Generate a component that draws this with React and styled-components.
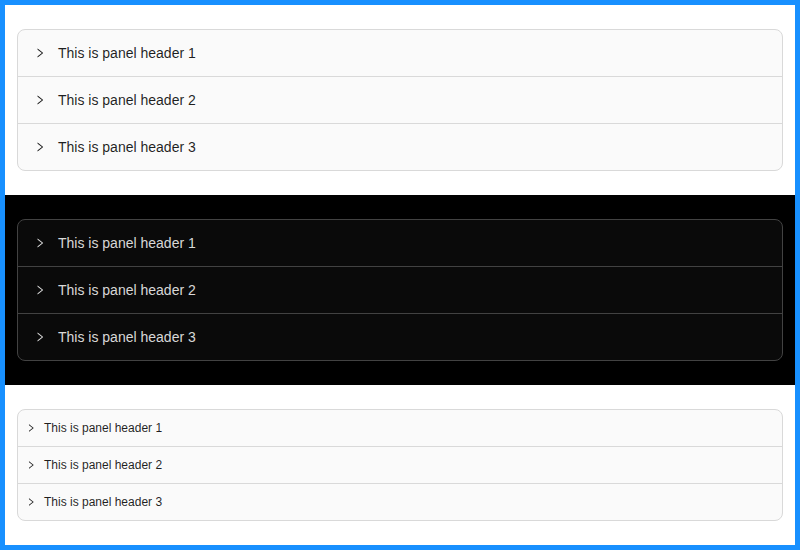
import React from 'react';
import styled, { createGlobalStyle, css } from 'styled-components';

const GlobalStyle = createGlobalStyle`
  html, body {
    margin: 0;
    padding: 0;
  }
  body {
    font-family: "Liberation Sans", Arial, sans-serif;
  }
`;

const Frame = styled.div`
  box-sizing: border-box;
  width: 800px;
  height: 550px;
  border: 5px solid #1890ff;
  display: flex;
  flex-direction: column;
  background: #fff;
`;

const Section = styled.div`
  padding: 24px 12px;
  background: ${(p) => (p.dark ? '#000' : '#fff')};
`;

const Collapse = styled.div`
  border: 1px solid ${(p) => (p.dark ? '#424242' : '#d9d9d9')};
  border-radius: 8px;
  background: ${(p) => (p.dark ? 'rgba(255,255,255,0.04)' : '#fafafa')};
  overflow: hidden;
`;

const Item = styled.div`
  border-bottom: 1px solid ${(p) => (p.dark ? '#424242' : '#d9d9d9')};

  &:last-child {
    border-bottom: none;
  }
`;

const Header = styled.div`
  display: flex;
  align-items: center;
  color: ${(p) => (p.dark ? 'rgba(255,255,255,0.85)' : 'rgba(0,0,0,0.88)')};
  cursor: pointer;
  ${(p) =>
    p.small
      ? css`
          padding: 8px 12px 8px 8px;
          font-size: 12px;
          line-height: 20px;
        `
      : css`
          padding: 12px 16px;
          font-size: 14px;
          line-height: 22px;
        `}
`;

const Arrow = styled.span`
  display: inline-flex;
  align-items: center;
  margin-right: ${(p) => (p.small ? '8px' : '12px')};

  svg {
    width: ${(p) => (p.small ? '10px' : '12px')};
    height: ${(p) => (p.small ? '10px' : '12px')};
    fill: currentColor;
  }
`;

const RightIcon = () => (
  <svg viewBox="0 0 1024 1024" aria-hidden="true">
    <path d="M765.7 486.8L314.9 134.7A7.97 7.97 0 00302 141v77.3c0 4.9 2.3 9.6 6.1 12.6l360 281.1-360 281.1c-3.9 3-6.1 7.7-6.1 12.6V883c0 6.7 7.7 10.4 12.9 6.3l450.8-352.1a31.96 31.96 0 000-50.4z" />
  </svg>
);

const panels = ['This is panel header 1', 'This is panel header 2', 'This is panel header 3'];

function Accordion({ dark, small }) {
  return (
    <Collapse dark={dark}>
      {panels.map((label) => (
        <Item key={label} dark={dark}>
          <Header dark={dark} small={small}>
            <Arrow small={small}>
              <RightIcon />
            </Arrow>
            <span>{label}</span>
          </Header>
        </Item>
      ))}
    </Collapse>
  );
}

export default function App() {
  return (
    <>
      <GlobalStyle />
      <Frame>
        <Section>
          <Accordion />
        </Section>
        <Section dark>
          <Accordion dark />
        </Section>
        <Section>
          <Accordion small />
        </Section>
      </Frame>
    </>
  );
}
